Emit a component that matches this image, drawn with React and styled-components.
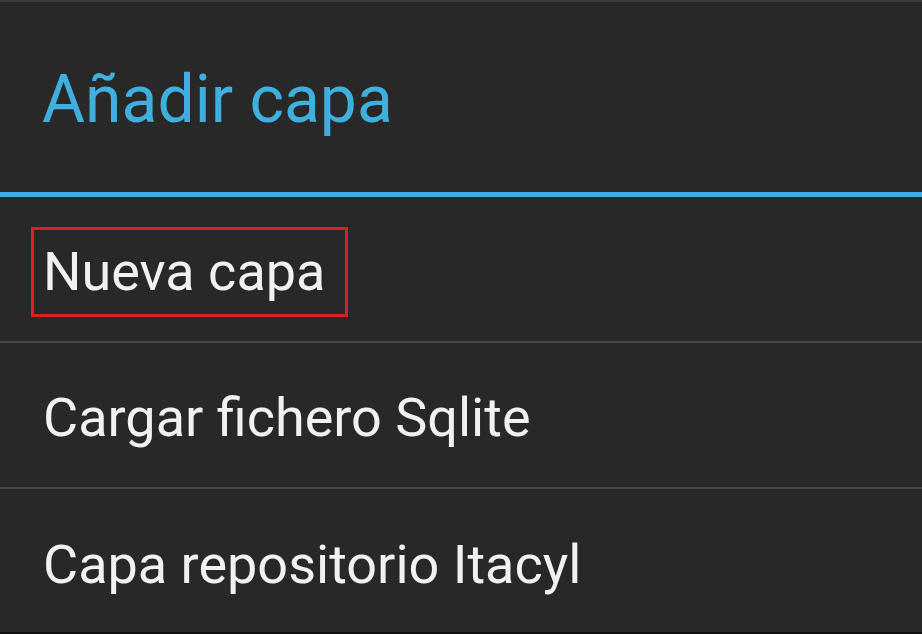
import styled, { createGlobalStyle } from "styled-components";

const GlobalStyle = createGlobalStyle`
  *, *::before, *::after {
    box-sizing: border-box;
  }
  html, body {
    margin: 0;
    padding: 0;
    background: #121212;
  }
  body {
    font-family: Roboto, "Noto Sans", sans-serif;
  }
`;

const Dialog = styled.section`
  width: 922px;
  height: 634px;
  display: flex;
  flex-direction: column;
  background-color: #282828;
  border-top: 2px solid #3a3a3a;
  border-bottom: 2px solid #111111;
  overflow: hidden;
`;

const Header = styled.header`
  height: 195px;
  display: flex;
  align-items: center;
  padding: 0 0 0 42px;
  border-bottom: 5px solid #41aedb;
  flex-shrink: 0;
`;

const Title = styled.h1`
  margin: 5px 0 0;
  font-size: 66px;
  font-weight: 400;
  color: #3fb0de;
`;

const List = styled.ul`
  list-style: none;
  margin: 0;
  padding: 0;
  flex: 1;
  display: flex;
  flex-direction: column;
`;

const Item = styled.li`
  height: 146px;
  display: flex;
  align-items: center;
  padding: 5px 0 0 ${(p) => (p.$marked ? "31px" : "43px")};
  border-bottom: ${(p) => (p.$last ? "none" : "2px solid #444444")};
  flex-shrink: 0;
  font-size: 54px;
  color: #f1f1f1;
`;

const Marked = styled.span`
  display: inline-block;
  padding: 10px 20px 11px 9px;
  border: 3px solid #dc1f27;
`;

export default function App() {
  return (
    <>
      <GlobalStyle />
      <Dialog>
        <Header>
          <Title>Añadir capa</Title>
        </Header>
        <List>
          <Item $marked>
            <Marked>Nueva capa</Marked>
          </Item>
          <Item>Cargar fichero Sqlite</Item>
          <Item $last>Capa repositorio Itacyl</Item>
        </List>
      </Dialog>
    </>
  );
}
